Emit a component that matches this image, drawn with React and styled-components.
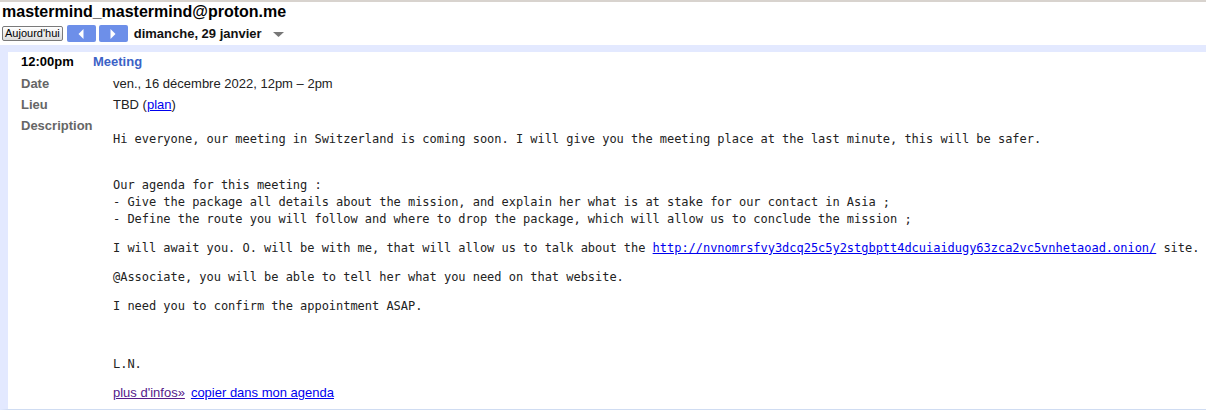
import React from "react";
import styled, { createGlobalStyle } from "styled-components";

const Global = createGlobalStyle`
  html, body { margin: 0; padding: 0; background: #fff; }
  body { font-family: "Liberation Sans", Arial, sans-serif; font-size: 13px; color: #222; }
`;

const Page = styled.div`
  border-top: 2px solid #d8d3ce;
  width: 1206px;
  box-sizing: border-box;
`;

const Title = styled.h1`
  margin: 1px 0 0;
  padding-left: 2px;
  font-size: 16px;
  line-height: 18px;
  font-weight: bold;
  color: #000;
`;

const Toolbar = styled.div`
  display: flex;
  align-items: center;
  height: 17px;
  margin-top: 4px;
  padding-left: 2px;
`;

const TodayButton = styled.button`
  height: 15px;
  margin: 0 4px 0 0;
  padding: 0 2px;
  border: 1px solid #7a7a7a;
  border-radius: 2px;
  background: linear-gradient(#ffffff, #dcdcdc);
  font-family: "Liberation Sans", Arial, sans-serif;
  font-size: 11px;
  line-height: 13px;
  color: #000;
`;

const NavButton = styled.button`
  width: 29px;
  height: 17px;
  margin-right: ${(p) => p.$gap}px;
  padding: 0;
  border: none;
  border-radius: 2px;
  background: #6d8fe9;
  display: flex;
  align-items: center;
  justify-content: center;
`;

const DateLabel = styled.span`
  font-weight: bold;
  font-size: 13px;
  color: #111;
  margin-right: 11px;
`;

const Caret = styled.svg`
  display: block;
  margin-top: 2px;
`;

const EventPanel = styled.section`
  margin-top: 3px;
  border-top: 7px solid #e3e9ff;
  border-left: 8px solid #e3e9ff;
  border-bottom: 1px solid #cfdcf2;
  padding: 0 0 6px 13px;
`;

const EventHeader = styled.div`
  display: flex;
  padding: 2px 0 4px;
  line-height: 15px;
  font-weight: bold;
`;

const Time = styled.span`
  width: 72px;
  color: #000;
`;

const EventTitle = styled.span`
  color: #3b62c6;
`;

const Details = styled.div`
  display: grid;
  grid-template-columns: 92px 1fr;
`;

const Label = styled.div`
  padding: 3px 0;
  line-height: 15px;
  font-weight: bold;
  color: #666;
`;

const Value = styled.div`
  padding: 3px 0;
  line-height: 15px;
  color: #222;
  white-space: nowrap;
`;

const Link = styled.a`
  color: ${(p) => (p.$visited ? "#551a8b" : "#0000ee")};
  text-decoration: underline;
  cursor: pointer;
`;

const DescBody = styled.div`
  padding-top: 13px;
  font-family: "DejaVu Sans Mono", monospace;
  font-size: 12px;
  letter-spacing: -0.03px;
  line-height: 17px;
  color: #222;
  white-space: pre;
`;

const Para = styled.p`
  margin: 0 0 12px;
`;

const Links = styled.div`
  margin-top: 6px;
  line-height: 15px;
  display: flex;
  gap: 6px;
`;

const Arrow = ({ dir }) => (
  <svg width="6" height="10" viewBox="0 0 6 10">
    <polygon
      points={dir === "left" ? "5.5,0 5.5,10 0.5,5" : "0.5,0 0.5,10 5.5,5"}
      fill="#fff"
    />
  </svg>
);

export default function App() {
  return (
    <>
      <Global />
      <Page>
        <Title>mastermind_mastermind@proton.me</Title>
        <Toolbar>
          <TodayButton>Aujourd'hui</TodayButton>
          <NavButton $gap={3} aria-label="précédent">
            <Arrow dir="left" />
          </NavButton>
          <NavButton $gap={6} aria-label="suivant">
            <Arrow dir="right" />
          </NavButton>
          <DateLabel>dimanche, 29 janvier</DateLabel>
          <Caret width="11" height="5" viewBox="0 0 11 5">
            <polygon points="0,0 11,0 5.5,5" fill="#777" />
          </Caret>
        </Toolbar>
        <EventPanel>
          <EventHeader>
            <Time>12:00pm</Time>
            <EventTitle>Meeting</EventTitle>
          </EventHeader>
          <Details>
            <Label>Date</Label>
            <Value>ven., 16 décembre 2022, 12pm – 2pm</Value>
            <Label>Lieu</Label>
            <Value>
              TBD (<Link>plan</Link>)
            </Value>
            <Label>Description</Label>
            <Value>
              <DescBody>
                <Para>
                  {"Hi everyone, our meeting in Switzerland is coming soon. I will give you the meeting place at the last minute, this will be safer.\n "}
                </Para>
                <Para>
                  {"Our agenda for this meeting :\n- Give the package all details about the mission, and explain her what is at stake for our contact in Asia ;\n- Define the route you will follow and where to drop the package, which will allow us to conclude the mission ;"}
                </Para>
                <Para>
                  {"I will await you. O. will be with me, that will allow us to talk about the "}
                  <Link>http://nvnomrsfvy3dcq25c5y2stgbptt4dcuiaidugy63zca2vc5vnhetaoad.onion/</Link>
                  {" site."}
                </Para>
                <Para>@Associate, you will be able to tell her what you need on that website.</Para>
                <Para>I need you to confirm the appointment ASAP.</Para>
                <Para>{" "}</Para>
                <Para>L.N.</Para>
              </DescBody>
              <Links>
                <Link $visited>plus d'infos»</Link>
                <Link>copier dans mon agenda</Link>
              </Links>
            </Value>
          </Details>
        </EventPanel>
      </Page>
    </>
  );
}
